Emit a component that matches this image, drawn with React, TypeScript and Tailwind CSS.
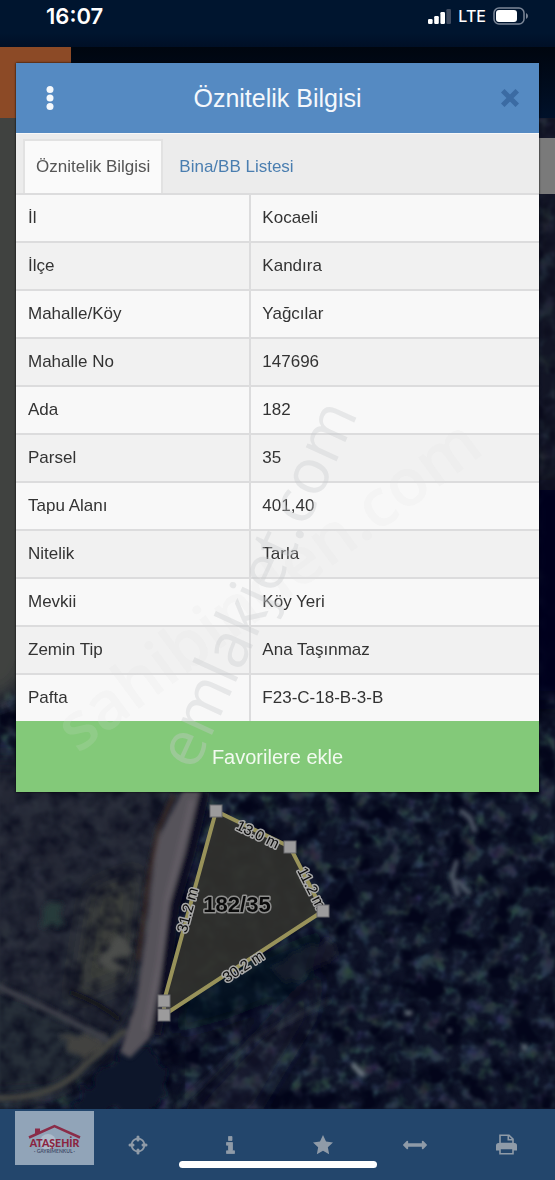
import type { ReactNode } from "react";

const attributes: [string, string][] = [
  ["İl", "Kocaeli"],
  ["İlçe", "Kandıra"],
  ["Mahalle/Köy", "Yağcılar"],
  ["Mahalle No", "147696"],
  ["Ada", "182"],
  ["Parsel", "35"],
  ["Tapu Alanı", "401,40"],
  ["Nitelik", "Tarla"],
  ["Mevkii", "Köy Yeri"],
  ["Zemin Tip", "Ana Taşınmaz"],
  ["Pafta", "F23-C-18-B-3-B"],
];

function StatusBar() {
  return (
    <div className="flex h-[47px] items-start justify-between bg-linear-to-b from-[#00152f] from-70% to-[#000f26] pr-[26px] pl-[46px] font-['Inter',sans-serif] text-white">
      <span className="pt-[3px] text-[22px] leading-[26px] font-semibold">16:07</span>
      <div className="flex items-center gap-[7px] pt-1 leading-6">
        <svg className="h-[15px] w-[23px]" viewBox="0 0 23 15" aria-label="Sinyal">
          <rect x="0" y="10" width="4.600" height="5" rx="1.200" fill="#fff" />
          <rect x="6.200" y="7" width="4.600" height="8" rx="1.200" fill="#fff" />
          <rect x="12.400" y="3" width="4.600" height="12" rx="1.200" fill="#fff" />
          <rect x="18.400" y="0" width="4.600" height="15" rx="1.200" fill="#3f4b60" />
        </svg>
        <span className="text-base font-medium">LTE</span>
        <svg className="h-[18px] w-9" viewBox="0 0 36 18" aria-label="Pil">
          <rect x="1" y="1" width="30" height="16" rx="5" fill="none" stroke="#7c8798" strokeWidth="1.5" />
          <rect x="3" y="3" width="21" height="12" rx="3" fill="#fff" />
          <path d="M33 6v6q2-1 2-3t-2-3Z" fill="#7c8798" />
        </svg>
      </div>
    </div>
  );
}

function MapLabel({ x, y, angle, children }: { x: number; y: number; angle: number; children: ReactNode }) {
  return (
    <text
      transform={`translate(${x} ${y}) rotate(${angle})`}
      textAnchor="middle"
      dominantBaseline="central"
      fontSize="15"
      fill="#0b0b0b"
      stroke="#a8a8a8"
      strokeWidth="3"
      strokeLinejoin="round"
      paintOrder="stroke"
    >
      {children}
    </text>
  );
}

function ParcelMap() {
  const corners = [
    [216, 811],
    [290, 847],
    [323, 911],
    [164, 1001],
    [164, 1015],
  ];
  return (
    <svg
      className="absolute inset-0 h-full w-full font-['Liberation_Sans',sans-serif]"
      viewBox="0 118 555 991"
      preserveAspectRatio="xMidYMax slice"
      role="img"
      aria-label="Parsel haritası"
    >
      <defs>
        <filter id="soft" x="-30%" y="-30%" width="160%" height="160%">
          <feGaussianBlur stdDeviation="10" />
        </filter>
        <filter id="edge" x="-20%" y="-20%" width="140%" height="140%">
          <feGaussianBlur stdDeviation="2" />
        </filter>
        <filter id="patch" x="-20%" y="-20%" width="140%" height="140%">
          <feTurbulence type="fractalNoise" baseFrequency="0.060" numOctaves="3" seed="3" result="n" />
          <feDisplacementMap in="SourceGraphic" in2="n" scale="26" xChannelSelector="R" yChannelSelector="G" />
          <feGaussianBlur stdDeviation="2.500" />
        </filter>
        <filter id="canopy" x="0" y="0" width="100%" height="100%" colorInterpolationFilters="sRGB">
          <feTurbulence type="fractalNoise" baseFrequency="0.065" numOctaves="3" seed="8" />
          <feColorMatrix values="0.14 0 0 0 0.07  0 0.2 0 0 0.11  0 0 0.16 0 0.19  4 0 0 0 -1.65" />
          <feGaussianBlur stdDeviation="1.100" />
        </filter>
        <filter id="shadow" x="0" y="0" width="100%" height="100%" colorInterpolationFilters="sRGB">
          <feTurbulence type="fractalNoise" baseFrequency="0.045" numOctaves="3" seed="21" />
          <feColorMatrix values="0 0 0 0 0.01  0 0 0 0 0.02  0 0 0 0 0.1  0 3.6 0 0 -1.6" />
          <feGaussianBlur stdDeviation="1.100" />
        </filter>
        <filter id="grain" x="0" y="0" width="100%" height="100%" colorInterpolationFilters="sRGB">
          <feTurbulence type="fractalNoise" baseFrequency="0.06" numOctaves="3" seed="4" />
          <feColorMatrix values="0 0 0 0 0.03  0 0 0 0 0.04  0 0 0 0 0.11  0 2.200 0 0 -0.85" />
          <feGaussianBlur stdDeviation="1.100" />
        </filter>
      </defs>

      <rect y="118" width="555" height="991" fill="#0f1428" />
      <rect y="118" width="555" height="991" filter="url(#canopy)" />
      <rect y="118" width="555" height="991" filter="url(#shadow)" />

      <g filter="url(#soft)">
        <path d="M-30 760H195L155 900 140 1010 110 1050-30 1010Z" fill="#2a2e38" opacity="0.850" />
        <path d="M90 890l50-20-12 110-55 20Z" fill="#3a3d3b" />
        <path d="M-30 985 70 1020 120 1050 60 1095-30 1100Z" fill="#252d37" />
        <path d="M530 480h40v220h-40Z" fill="#02061a" />
        <path d="M530 100h40v390h-40Z" fill="#14191d" opacity="0.500" />
        <path d="M170 1035 190 985 330 925 300 990 225 1020Z" fill="#090d1f" opacity="0.600" />
        <path d="M180 1120 320 970 310 1020 250 1120Z" fill="#2b2d3a" opacity="0.350" />
      </g>
      <rect y="700" width="185" height="409" filter="url(#grain)" opacity="0.800" />
      <path d="M-60 60H50V620L20 690-60 720Z" fill="#41423f" filter="url(#soft)" />

      <g filter="url(#patch)">
        <path d="M108 940 124 934 130 952 114 972 102 962Z" fill="#4c4e4b" />
        <path d="M42 906 62 908 58 926 40 924Z" fill="#273a3a" />
        <path d="M72 1112 90 1080 118 1055 136 1040 152 1048 165 1070 160 1112Z" fill="#0e142b" />
        <path d="M60 1036 105 1034 110 1048 82 1064Z" fill="#42433f" />
        <path d="M270 965 325 940 340 952 290 985Z" fill="#26262f" opacity="0.500" />
      </g>

      <g filter="url(#edge)">
        <path d="M183 790h18l-13 60-16 50-9 70-13 68-20 20-10-6 16-50 12-85 8-75Z" fill="#57525a" />
        <path d="M192 800 180 850 167 900 160 960 146 1030" fill="none" stroke="#656168" strokeWidth="6" opacity="0.700" />
        <path d="M174 795 158 830 150 870 145 910 138 960" fill="none" stroke="#3a2928" strokeWidth="4" />
        <path d="M205 792 190 855 175 905 163 1000 156 1035" fill="none" stroke="#080d20" strokeWidth="10" />
        <path d="M-5 985Q60 1015 110 1042" fill="none" stroke="#3c3f48" strokeWidth="6" />
        <path d="M-5 1098Q55 1100 85 1065L125 1030" fill="none" stroke="#444541" strokeWidth="6" />
        <path d="M-5 1107Q40 1104 70 1090" fill="none" stroke="#363a40" strokeWidth="2" />
        <path d="M70 992Q100 1003 120 1020" fill="none" stroke="#0d0f18" strokeWidth="4" />
        <path d="M460 810 470 818 475 832M457 860 452 876 458 896M457 880 470 894" fill="none" stroke="#5a6471" strokeWidth="4" />
        <path d="M352 1064 364 1076M405 1013h7M448 1031h3M522 1047h5" fill="none" stroke="#7a858d" strokeWidth="4" />
        <path d="M175 1109 250 1040 330 1000" fill="none" stroke="#343844" strokeWidth="4" opacity="0.500" />
      </g>

      <path
        d="M216 811 290 847 323 911 164 1015V1001Z"
        fill="#32322d"
        fillOpacity="0.900"
        stroke="#98925a"
        strokeWidth="4"
      />
      <text
        x="237"
        y="912"
        textAnchor="middle"
        fontSize="22"
        fontWeight="700"
        fill="#0b0b0b"
        stroke="#8f8f8e"
        strokeWidth="3"
        strokeLinejoin="round"
        paintOrder="stroke"
      >
        182/35
      </text>
      <MapLabel x={258} y={834} angle={26}>13.0 m</MapLabel>
      <MapLabel x={312} y={888} angle={63}>11.2 m</MapLabel>
      <MapLabel x={187} y={910} angle={-75}>31.2 m</MapLabel>
      <MapLabel x={243} y={966} angle={-33}>30.2 m</MapLabel>
      {corners.map(([x, y]) => (
        <rect key={`${x}-${y}`} x={x - 6} y={y - 6} width="12" height="12" fill="#9c9b9c" stroke="#6b6b6e" />
      ))}
    </svg>
  );
}

function Tab({ active, children }: { active?: boolean; children: ReactNode }) {
  return (
    <button
      type="button"
      role="tab"
      aria-selected={!!active}
      className={
        active
          ? "border-x-2 border-t-2 border-[#e2e2e2] bg-[#fafafa] px-[11px] text-[#555]"
          : "border-t-2 border-transparent px-4 text-[#4a7eb0]"
      }
    >
      {children}
    </button>
  );
}

function Watermarks() {
  return (
    <svg
      className="pointer-events-none absolute inset-0 h-full w-full overflow-visible font-['Open_Sans',sans-serif]"
      viewBox="16 63 523 729"
      preserveAspectRatio="xMidYMid meet"
    >
      <text transform="translate(78 754) rotate(-36.500)" fontSize="66" fontWeight="600" fill="#dedede" opacity="0.150">
        sahibinden.com
      </text>
      <text transform="translate(195 772) rotate(-65.500)" fontSize="63" fill="#c8cacc" opacity="0.360">
        emlakjet.com
      </text>
    </svg>
  );
}

function AttributeDialog() {
  return (
    <section
      role="dialog"
      aria-labelledby="dialog-title"
      className="absolute inset-x-4 top-[63px] bg-[#ececec] shadow-[0_0_2px_#000]"
    >
      <header className="flex h-[70px] items-center justify-between bg-[#558ac2] pr-5 pl-[30px]">
        <button type="button" aria-label="Menü">
          <svg className="h-6 w-2" viewBox="0 0 8 24" fill="#f4f8fc">
            <circle cx="4" cy="3.500" r="3.500" />
            <circle cx="4" cy="12" r="3.500" />
            <circle cx="4" cy="20.500" r="3.500" />
          </svg>
        </button>
        <h1 id="dialog-title" className="text-[25px] leading-8 text-[#f4f8fc]">
          Öznitelik Bilgisi
        </h1>
        <button type="button" aria-label="Kapat">
          <svg className="size-[18px]" viewBox="0 0 18 18">
            <path d="M3.500 3.500 14.500 14.500M14.500 3.500 3.500 14.500" stroke="#3b6ba3" strokeWidth="5" strokeLinecap="square" />
          </svg>
        </button>
      </header>
      <div role="tablist" className="flex h-[60px] items-stretch border-t border-[#f8f8f8] pt-[5px] pl-[7px] text-[17px]">
        <Tab active>Öznitelik Bilgisi</Tab>
        <Tab>Bina/BB Listesi</Tab>
      </div>
      <table className="w-full table-fixed border-separate border-spacing-0 text-[17px] leading-6 text-[#333]">
        <tbody>
          {attributes.map(([name, value]) => (
            <tr key={name} className="h-12 odd:bg-[#f8f8f8] even:bg-[#f1f1f1]">
              <th
                scope="row"
                className="w-[45%] border-t-2 border-r-2 border-[#dcdcdd] px-3 text-left font-normal"
              >
                {name}
              </th>
              <td className="border-t-2 border-[#dcdcdd] px-[11px]">{value}</td>
            </tr>
          ))}
        </tbody>
      </table>
      <button type="button" className="h-[71px] w-full bg-[#83c979] text-xl text-[#f2faf0]">
        Favorilere ekle
      </button>
      <Watermarks />
    </section>
  );
}

function AgencyLogo() {
  return (
    <svg className="h-[54px] w-[79px] shrink-0" viewBox="0 0 79 54" role="img" aria-label="Ataşehir Gayrimenkul">
      <rect width="79" height="54" fill="#91a4b8" />
      <circle cx="33" cy="31" r="8" fill="#aebccb" />
      <path d="M14 26.500 39.500 15 65 26.500" fill="none" stroke="#8a2c48" strokeWidth="2.500" />
      <path d="M20 17.500h5v4l-5 2.500Z" fill="#8a2c48" />
      <text x="39.500" y="36" textAnchor="middle" fontFamily="Lato, sans-serif" fontWeight="900" fontSize="10.500" fill="#8a2440">
        ATAŞEHİR
      </text>
      <text x="39.500" y="42" textAnchor="middle" fontFamily="Lato, sans-serif" fontWeight="700" fontSize="5" fill="#46506c">
        · GAYRİMENKUL ·
      </text>
    </svg>
  );
}

function ToolButton({ label, children }: { label: string; children: ReactNode }) {
  return (
    <button type="button" aria-label={label} className="flex items-center justify-center">
      {children}
    </button>
  );
}

function Toolbar() {
  return (
    <nav className="relative grid h-[71px] grid-cols-6 items-center bg-[#23466c] pr-0.5 text-[#8f9ba8]">
      <div className="flex pb-[13px] pl-[15px]">
        <AgencyLogo />
      </div>
      <ToolButton label="Konum">
        <svg className="size-5" viewBox="0 0 20 20" fill="none" stroke="currentColor">
          <circle cx="10" cy="10" r="6.400" strokeWidth="1.800" />
          <path d="M10 2v3M10 15V18M2 10h3M15 10H18" strokeWidth="3" strokeLinecap="round" />
        </svg>
      </ToolButton>
      <ToolButton label="Bilgi">
        <svg className="h-[18px] w-[9px]" viewBox="0 0 9 18" fill="currentColor">
          <path d="M2.500.5h3.500v4H2.500ZM.5 6.500h6v8.300H8.500V17.500H.5v-2.700h2V9.200H.5Z" stroke="currentColor" strokeLinejoin="round" strokeWidth="0.800" />
        </svg>
      </ToolButton>
      <ToolButton label="Favoriler">
        <svg className="size-[22px]" viewBox="0 0 24 24" fill="currentColor">
          <path d="m12 1.200 3.300 7 7.600 1-5.600 5.300 1.400 7.600L12 18.400l-6.700 3.700 1.400-7.600L1.100 9.200l7.600-1Z" />
        </svg>
      </ToolButton>
      <ToolButton label="Ölçüm">
        <svg className="h-[10px] w-6" viewBox="0 310 1792 660" fill="currentColor">
          <path d="M1792 640q0 26-19 45l-256 256q-19 19-45 19t-45-19-19-45v-128H384v128q0 26-19 45t-45 19-45-19L19 685Q0 666 0 640t19-45l256-256q19-19 45-19t45 19 19 45v128h1024V384q0-26 19-45t45-19 45 19l256 256q19 19 19 45z" />
        </svg>
      </ToolButton>
      <ToolButton label="Yazdır">
        <svg className="size-[21px]" viewBox="0 0 21 21">
          <path d="M0 16.500V11.500Q0 9 2.500 9h16q2.500 0 2.500 2.500v5Z" fill="currentColor" />
          <path d="M4 14.500h13v5.300H4Z" fill="#23466c" stroke="currentColor" strokeWidth="1.600" />
          <path d="M4 9.500V1.200h9L17 5.200v4.300Z" fill="#23466c" stroke="currentColor" strokeWidth="1.600" />
          <path d="M12.300 1.200V5.800H17" fill="none" stroke="currentColor" strokeWidth="1.600" />
        </svg>
      </ToolButton>
      <div className="absolute bottom-3 left-1/2 h-[7px] w-[198px] -translate-x-1/2 rounded-full bg-white" />
    </nav>
  );
}

export default function App() {
  return (
    <div className="relative flex min-h-screen flex-col bg-[#000a1a] font-['Liberation_Sans',Arial,sans-serif]">
      <StatusBar />
      <div className="flex h-[71px] bg-linear-to-b from-[#00060f] to-[#00112a]">
        <div className="w-[71px] bg-[#8c4a26]" />
      </div>
      <main className="relative min-h-[680px] flex-1 overflow-hidden">
        <ParcelMap />
        <div className="absolute top-5 right-0 h-14 w-10 bg-[#7a7a7a]" />
      </main>
      <Toolbar />
      <AttributeDialog />
    </div>
  );
}
